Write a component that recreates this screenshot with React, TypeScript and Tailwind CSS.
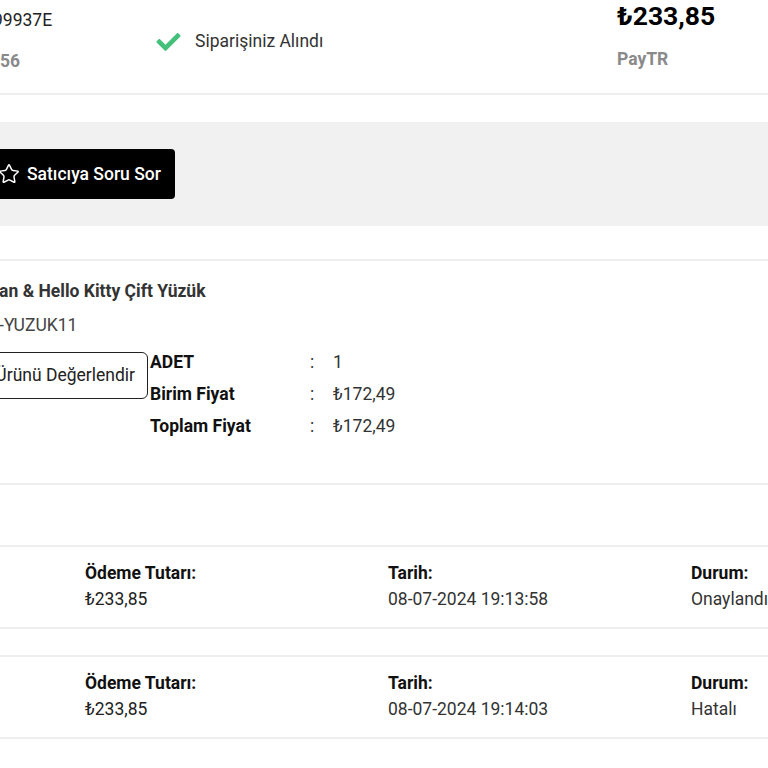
import React from "react";
import { FaCheck } from "react-icons/fa";
import { Star } from "lucide-react";

const Divider = () => <div className="h-[2px] w-full bg-[#eeeeee]" />;

function PaymentRow({ amount, date, status }: { amount: string; date: string; status: string }) {
  return (
    <div className="flex pl-[85px] pt-[13px] pb-[15px] h-[80px] text-[17.5px] leading-[26px]">
      <div className="w-[303px] shrink-0">
        <div className="font-bold text-[#111]">Ödeme Tutarı:</div>
        <div className="text-[#222]">{amount}</div>
      </div>
      <div className="w-[303px] shrink-0">
        <div className="font-bold text-[#111]">Tarih:</div>
        <div className="text-[#333]">{date}</div>
      </div>
      <div className="w-[303px] shrink-0 whitespace-nowrap">
        <div className="font-bold text-[#111]">Durum:</div>
        <div className="text-[#333]">{status}</div>
      </div>
    </div>
  );
}

function DetailRow({ label, value }: { label: string; value: string }) {
  return (
    <div className="flex h-[32px] items-center text-[17.5px]">
      <div className="w-[160px] font-bold text-[#111]">{label}</div>
      <div className="w-[23px] text-[#333]">:</div>
      <div className="text-[#333]">{value}</div>
    </div>
  );
}

export default function App() {
  return (
    <div
      className="w-[768px] h-[768px] overflow-hidden bg-white"
      style={{ fontFamily: "Roboto, 'Liberation Sans', sans-serif" }}
    >
      {/* Order summary */}
      <div className="flex h-[93px] whitespace-nowrap">
        <div className="w-[150px] shrink-0 pt-[8px]">
          <div className="-ml-[7px] text-[17.5px] leading-6 text-[#222]">99937E</div>
          <div className="mt-[17px] text-[17.5px] leading-6 font-bold text-[#8a8a8a]">56</div>
        </div>
        <div className="w-[467px] shrink-0 flex items-center gap-[12px] pt-[2px] pb-[12px] pl-[4px]">
          <FaCheck className="text-[#45c07a] w-[29px] h-[24px]" />
          <span className="text-[17.5px] text-[#333]">Siparişiniz Alındı</span>
        </div>
        <div className="shrink-0">
          <div className="text-[26.5px] leading-8 font-bold text-black">₺233,85</div>
          <div className="mt-[15px] text-[17.5px] leading-6 font-bold text-[#8a8a8a]">PayTR</div>
        </div>
      </div>
      <Divider />

      {/* Seller question band */}
      <div className="mt-[27px] h-[104px] bg-[#f1f1f1] flex items-center">
        <button className="-ml-[10px] h-[50px] w-[185px] bg-black rounded-[4px] flex items-center gap-[7px] pl-[8px] text-white">
          <Star className="w-[22px] h-[22px]" strokeWidth={1.6} />
          <span className="text-[17.5px] font-medium">Satıcıya Soru Sor</span>
        </button>
      </div>
      <div className="h-[33px]" />
      <Divider />

      {/* Product */}
      <div className="h-[222px] whitespace-nowrap">
        <div className="pt-[18px] -ml-[12px] text-[17.5px] leading-6 font-bold text-[#333]">
          Xan &amp; Hello Kitty Çift Yüzük
        </div>
        <div className="mt-[10px] -ml-[11px] text-[17.5px] leading-6 text-[#444]">Y-YUZUK11</div>
        <div className="flex mt-[9px]">
          <div className="pt-[6px]">
            <button className="-ml-[20px] w-[168px] h-[47px] border border-[#222] rounded-[6px] text-[17.5px] text-[#222] text-right pr-[12px]">
              Ürünü Değerlendir
            </button>
          </div>
          <div className="ml-[2px]">
            <DetailRow label="ADET" value="1" />
            <DetailRow label="Birim Fiyat" value="₺172,49" />
            <DetailRow label="Toplam Fiyat" value="₺172,49" />
          </div>
        </div>
      </div>
      <Divider />

      {/* Payments */}
      <div className="h-[60px]" />
      <Divider />
      <PaymentRow amount="₺233,85" date="08-07-2024 19:13:58" status="Onaylandı" />
      <Divider />
      <div className="h-[26px]" />
      <Divider />
      <PaymentRow amount="₺233,85" date="08-07-2024 19:14:03" status="Hatalı" />
      <Divider />
    </div>
  );
}
